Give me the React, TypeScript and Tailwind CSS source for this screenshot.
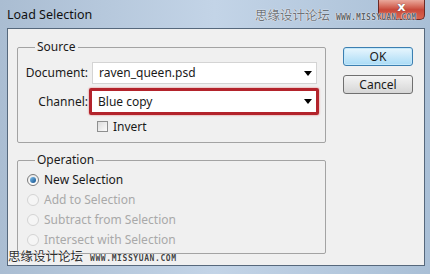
import React from "react";

const font = { fontFamily: '"Noto Sans", "Open Sans", sans-serif' };

function Arrow() {
  return (
    <svg width="8" height="5" viewBox="0 0 8 5" className="ml-auto mr-[4px]">
      <path d="M0 0 H8 L4 5 Z" fill="#000" />
    </svg>
  );
}

function Radio({ checked, disabled, label }: { checked?: boolean; disabled?: boolean; label: string }) {
  return (
    <div className="flex items-center h-[20px] pl-[9px]">
      <div
        className={
          "w-[12px] h-[12px] rounded-full border flex items-center justify-center " +
          (disabled
            ? "border-[#d4d4d4] bg-[#f5f5f5]"
            : "border-[#7a7a7a] bg-gradient-to-b from-[#eaeaea] to-[#ffffff]")
        }
      >
        {checked && (
          <div className="w-[6px] h-[6px] rounded-full bg-gradient-to-br from-[#7fc2ef] to-[#0c4f8a]" />
        )}
      </div>
      <span className={"ml-[5px] text-[12px] leading-none " + (disabled ? "text-[#a9a9a9]" : "text-[#1a1a1a]")}>
        {label}
      </span>
    </div>
  );
}

export default function App() {
  return (
    <div
      className="w-[430px] h-[274px] relative overflow-hidden flex flex-col bg-gradient-to-r from-[#aabdd2] via-[#c3d4e7] to-[#a9bfd6]"
      style={font}
    >
      {/* title bar */}
      <div className="h-[28px] flex items-start">
        <div className="pl-[7px] pt-[6px] text-[12.5px] leading-[18px] text-[#111]">Load Selection</div>
        <div className="ml-auto mr-[5px] w-[47px] h-[20px] rounded-b-[5px] border border-t-0 border-[#6b2a25] bg-gradient-to-b from-[#e9a89c] via-[#c94a3c] to-[#d8644f] flex items-start justify-center">
          <span
            className="text-white font-bold text-[13px] leading-[14px]"
            style={{ fontFamily: '"DejaVu Sans", sans-serif', textShadow: "0 0 1px #333" }}
          >
            x
          </span>
        </div>
      </div>

      {/* panel */}
      <div className="ml-[7px] mr-[5px] h-[238px] border border-[#56687c] bg-[#f0f0f0] flex text-[12px] text-[#1a1a1a]">
        <div className="pl-[9px] pt-[11px] flex flex-col">
          <fieldset className="w-[309px] border border-[#a3a3a3] rounded-[2px] pb-[10px]">
            <legend className="ml-[17px] px-[2px] leading-[14px] text-[12px]">Source</legend>
            <div className="flex items-center mt-[8px]">
              <span className="w-[70px] text-right">Document:</span>
              <div className="ml-[4px] w-[225px] h-[22px] bg-white border border-[#d4d4d4] flex items-center pl-[6px]">
                <span>raven_queen.psd</span>
                <Arrow />
              </div>
            </div>
            <div className="flex items-center mt-[4px]">
              <span className="w-[70px] text-right">Channel:</span>
              <div className="ml-[1px] w-[230px] h-[27px] border-[3px] border-[#b3232b] rounded-[2px] shadow-[0_0_2px_#d66]">
                <div className="w-full h-full bg-white flex items-center pl-[6px]">
                  <span>Blue copy</span>
                  <Arrow />
                </div>
              </div>
            </div>
            <div className="flex items-center mt-[6px] ml-[79px] h-[11px]">
              <div className="w-[11px] h-[11px] border border-[#8e8f8f] bg-gradient-to-br from-[#dcdcdc] to-[#fbfbfb]" />
              <span className="ml-[5px] leading-none">Invert</span>
            </div>
          </fieldset>

          <fieldset className="mt-[10px] w-[309px] border border-[#a3a3a3] rounded-[2px] pb-[3px]">
            <legend className="ml-[17px] px-[2px] leading-[14px] text-[12px]">Operation</legend>
            <div className="mt-[3px] flex flex-col">
              <Radio checked label="New Selection" />
              <Radio disabled label="Add to Selection" />
              <Radio disabled label="Subtract from Selection" />
              <Radio disabled label="Intersect with Selection" />
            </div>
          </fieldset>
        </div>

        <div className="ml-[17px] pt-[18px] flex flex-col gap-[9px]">
          <div className="w-[70px] h-[19px] rounded-[3px] border border-[#3c7fb1] bg-gradient-to-b from-[#e8f6fd] to-[#a9dbf6] flex items-center justify-center shadow-[inset_0_0_0_1px_#c4e8fa]">
            OK
          </div>
          <div className="w-[70px] h-[19px] rounded-[3px] border border-[#707070] bg-gradient-to-b from-[#f4f4f4] to-[#d6d6d6] flex items-center justify-center">
            Cancel
          </div>
        </div>
      </div>

      {/* watermarks */}
      <div className="absolute left-[255px] top-[9px] flex items-end">
        <span
          className="text-[12.5px] text-[#6d7278] leading-none"
          style={{ fontFamily: '"Noto Sans CJK SC", sans-serif', textShadow: "0 0 1px #fff, 0 0 1px #fff" }}
        >
          思缘设计论坛
        </span>
        <span
          className="ml-[6px] text-[8px] font-bold tracking-[0.2px] text-[#5d646b] leading-none"
          style={{ fontFamily: '"DejaVu Sans Mono", monospace', textShadow: "0 0 1px #fff, 0 0 1px #fff" }}
        >
          WWW.MISSYUAN.COM
        </span>
      </div>
      <div className="absolute left-[8px] top-[250px] flex items-end">
        <span
          className="text-[12.5px] text-[#2e2e2e] leading-none"
          style={{ fontFamily: '"Noto Sans CJK SC", sans-serif', textShadow: "0 0 1px #fff, 0 0 1px #fff" }}
        >
          思缘设计论坛
        </span>
        <span
          className="ml-[7px] text-[8px] font-bold tracking-[0.6px] text-[#444] leading-none"
          style={{ fontFamily: '"DejaVu Sans Mono", monospace', textShadow: "0 0 1px #fff, 0 0 1px #fff" }}
        >
          WWW.MISSYUAN.COM
        </span>
      </div>
    </div>
  );
}
